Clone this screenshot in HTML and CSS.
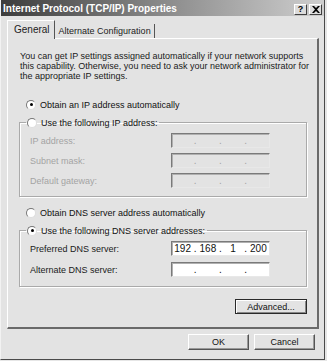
FILE: index.html
```html
<!DOCTYPE html>
<html lang="en">
<head>
  <meta charset="UTF-8">
  <title>Internet Protocol (TCP/IP) Properties</title>
  <link rel="stylesheet" href="styles.css">
</head>
<body>

  <div class="window">
    <div class="titlebar">
      <span class="title">Internet Protocol (TCP/IP) Properties</span>
      <div class="caption-buttons">
        <button class="cap-btn">?</button>
        <button class="cap-btn">
          <svg width="8" height="7" viewBox="0 0 8 7"><path d="M0 0 L2 0 L4 2 L6 0 L8 0 L5 3.5 L8 7 L6 7 L4 5 L2 7 L0 7 L3 3.5 Z" fill="#000"/></svg>
        </button>
      </div>
    </div>

    <div class="content">
      <div class="tabs">
        <div class="tab active">General</div>
        <div class="tab">Alternate Configuration</div>
      </div>

      <div class="panel">
        <p class="intro">You can get IP settings assigned automatically if your network supports<br>this capability. Otherwise, you need to ask your network administrator for<br>the appropriate IP settings.</p>

        <label class="radio-row"><span class="radio checked"></span>Obtain an IP address automatically</label>

        <fieldset class="group">
          <legend class="radio-row"><span class="radio"></span>Use the following IP address:</legend>
          <div class="field-row disabled">
            <span class="field-label">IP address:</span>
            <div class="ip-box"><span></span><i>.</i><span></span><i>.</i><span></span><i>.</i><span></span></div>
          </div>
          <div class="field-row disabled">
            <span class="field-label">Subnet mask:</span>
            <div class="ip-box"><span></span><i>.</i><span></span><i>.</i><span></span><i>.</i><span></span></div>
          </div>
          <div class="field-row disabled">
            <span class="field-label">Default gateway:</span>
            <div class="ip-box"><span></span><i>.</i><span></span><i>.</i><span></span><i>.</i><span></span></div>
          </div>
        </fieldset>

        <label class="radio-row"><span class="radio"></span>Obtain DNS server address automatically</label>

        <fieldset class="group dns">
          <legend class="radio-row"><span class="radio checked"></span>Use the following DNS server addresses:</legend>
          <div class="field-row">
            <span class="field-label">Preferred DNS server:</span>
            <div class="ip-box"><span>192</span><i>.</i><span>168</span><i>.</i><span>1</span><i>.</i><span>200</span></div>
          </div>
          <div class="field-row">
            <span class="field-label">Alternate DNS server:</span>
            <div class="ip-box"><span></span><i>.</i><span></span><i>.</i><span></span><i>.</i><span></span></div>
          </div>
        </fieldset>

        <div class="advanced-row">
          <button class="btn btn-dark">Advanced...</button>
        </div>
      </div>

      <div class="dialog-buttons">
        <button class="btn">OK</button>
        <button class="btn">Cancel</button>
      </div>
    </div>
  </div>

</body>
</html>
```

FILE: styles.css
```css
body {
  margin: 0;
  background-color: #e6e6e6;
  font-family: "Liberation Sans", Arial, sans-serif;
  font-size: 9px;
  color: #111;
}

.window {
  width: 325px;
  height: 360px;
  box-sizing: border-box;
  background-color: #e3e3e3;
  border-left: 1px solid #f2f2f2;
  border-right: 1px solid #4a4a4a;
  border-bottom: 1px solid #4a4a4a;
}

.titlebar {
  height: 16px;
  display: flex;
  align-items: center;
  justify-content: space-between;
  padding: 0 2px 0 2px;
  background: linear-gradient(to right, #3c3c3c, #8a8a8a 50%, #cfcfcf);
}

.title {
  color: #fff;
  font-weight: bold;
  font-size: 10px;
}

.caption-buttons {
  display: flex;
  gap: 2px;
  margin-top: 2px;
}

.cap-btn {
  width: 13px;
  height: 11px;
  padding: 0;
  display: flex;
  align-items: center;
  justify-content: center;
  background-color: #dcdcdc;
  border: 1px solid;
  border-color: #fff #404040 #404040 #fff;
  font-family: "Liberation Sans", Arial, sans-serif;
  font-weight: bold;
  font-size: 9px;
  color: #000;
}

.content {
  padding: 5px 6px 0 6px;
}

.tabs {
  display: flex;
  align-items: flex-end;
  height: 17px;
}

.tab {
  height: 14px;
  line-height: 14px;
  padding: 0 3px 0 4px;
  border-right: 1px solid #555;
  color: #222;
}

.tab.active {
  height: 18px;
  line-height: 17px;
  margin-bottom: -1px;
  padding: 0 4px 0 6px;
  border-left: 1px solid #fff;
  border-top: 1px solid #fff;
  border-right: 1px solid #555;
  background-color: #e3e3e3;
  position: relative;
  font-size: 10px;
}

.panel {
  width: 312px;
  height: 291px;
  box-sizing: border-box;
  padding: 12px 10px 0 11px;
  border-top: 1px solid #fff;
  border-left: 1px solid #fff;
  border-right: 2px solid #6a6a6a;
  border-bottom: 2px solid #6a6a6a;
}

.intro {
  margin: 0 0 17px 1px;
  line-height: 10px;
  white-space: nowrap;
  color: #1a1a1a;
}

.radio-row {
  display: flex;
  align-items: center;
  height: 13px;
  padding-left: 7px;
  gap: 4px;
  white-space: nowrap;
}

.radio {
  width: 8px;
  height: 8px;
  border-radius: 50%;
  background-color: #fff;
  border: 1px solid #777;
  border-right-color: #ddd;
  border-bottom-color: #ddd;
  display: flex;
  align-items: center;
  justify-content: center;
}

.radio.checked::after {
  content: "";
  width: 3px;
  height: 3px;
  border-radius: 50%;
  background-color: #000;
}

.group {
  margin: 5px 0 9px 0;
  padding: 4px 36px 8px 10px;
  border: 1px solid #aaa;
  box-shadow: inset 1px 1px #fff, 1px 1px #fff;
  display: flex;
  flex-direction: column;
  gap: 5px;
}

.group legend.radio-row {
  margin-left: -4px;
  padding: 0 2px 0 1px;
}

.group.dns {
  margin-bottom: 12px;
  gap: 6px;
  padding-top: 4px;
  padding-bottom: 9px;
}

.field-row {
  display: flex;
  align-items: center;
  justify-content: space-between;
  height: 15px;
}

.field-label {
  color: #1a1a1a;
}

.field-row.disabled .field-label {
  color: #a4a4a4;
}

.ip-box {
  width: 99px;
  height: 15px;
  box-sizing: border-box;
  display: grid;
  grid-template-columns: 1fr 4px 1fr 4px 1fr 4px 1fr;
  align-items: center;
  text-align: center;
  background-color: #fff;
  border: 1px solid;
  border-color: #7a7a7a #e8e8e8 #e8e8e8 #7a7a7a;
  box-shadow: inset 1px 1px #b0b0b0;
  font-size: 10px;
}

.ip-box i {
  font-style: normal;
}

.field-row.disabled .ip-box {
  background-color: #e3e3e3;
  color: #a4a4a4;
}

.advanced-row {
  display: flex;
  justify-content: flex-end;
}

.btn {
  height: 15px;
  padding: 0;
  font-family: "Liberation Sans", Arial, sans-serif;
  font-size: 9px;
  color: #111;
  background-color: #e3e3e3;
  border: 1px solid;
  border-color: #fff #555 #555 #fff;
  box-shadow: inset -1px -1px #999;
}

.btn-dark {
  width: 72px;
  border: 1px solid #2a2a2a;
  box-shadow: inset 1px 1px #fff, inset -1px -1px #888;
}

.dialog-buttons {
  display: flex;
  justify-content: flex-end;
  gap: 5px;
  margin-top: 5px;
  padding-right: 3px;
}

.dialog-buttons .btn {
  width: 61px;
  height: 16px;
}
```
